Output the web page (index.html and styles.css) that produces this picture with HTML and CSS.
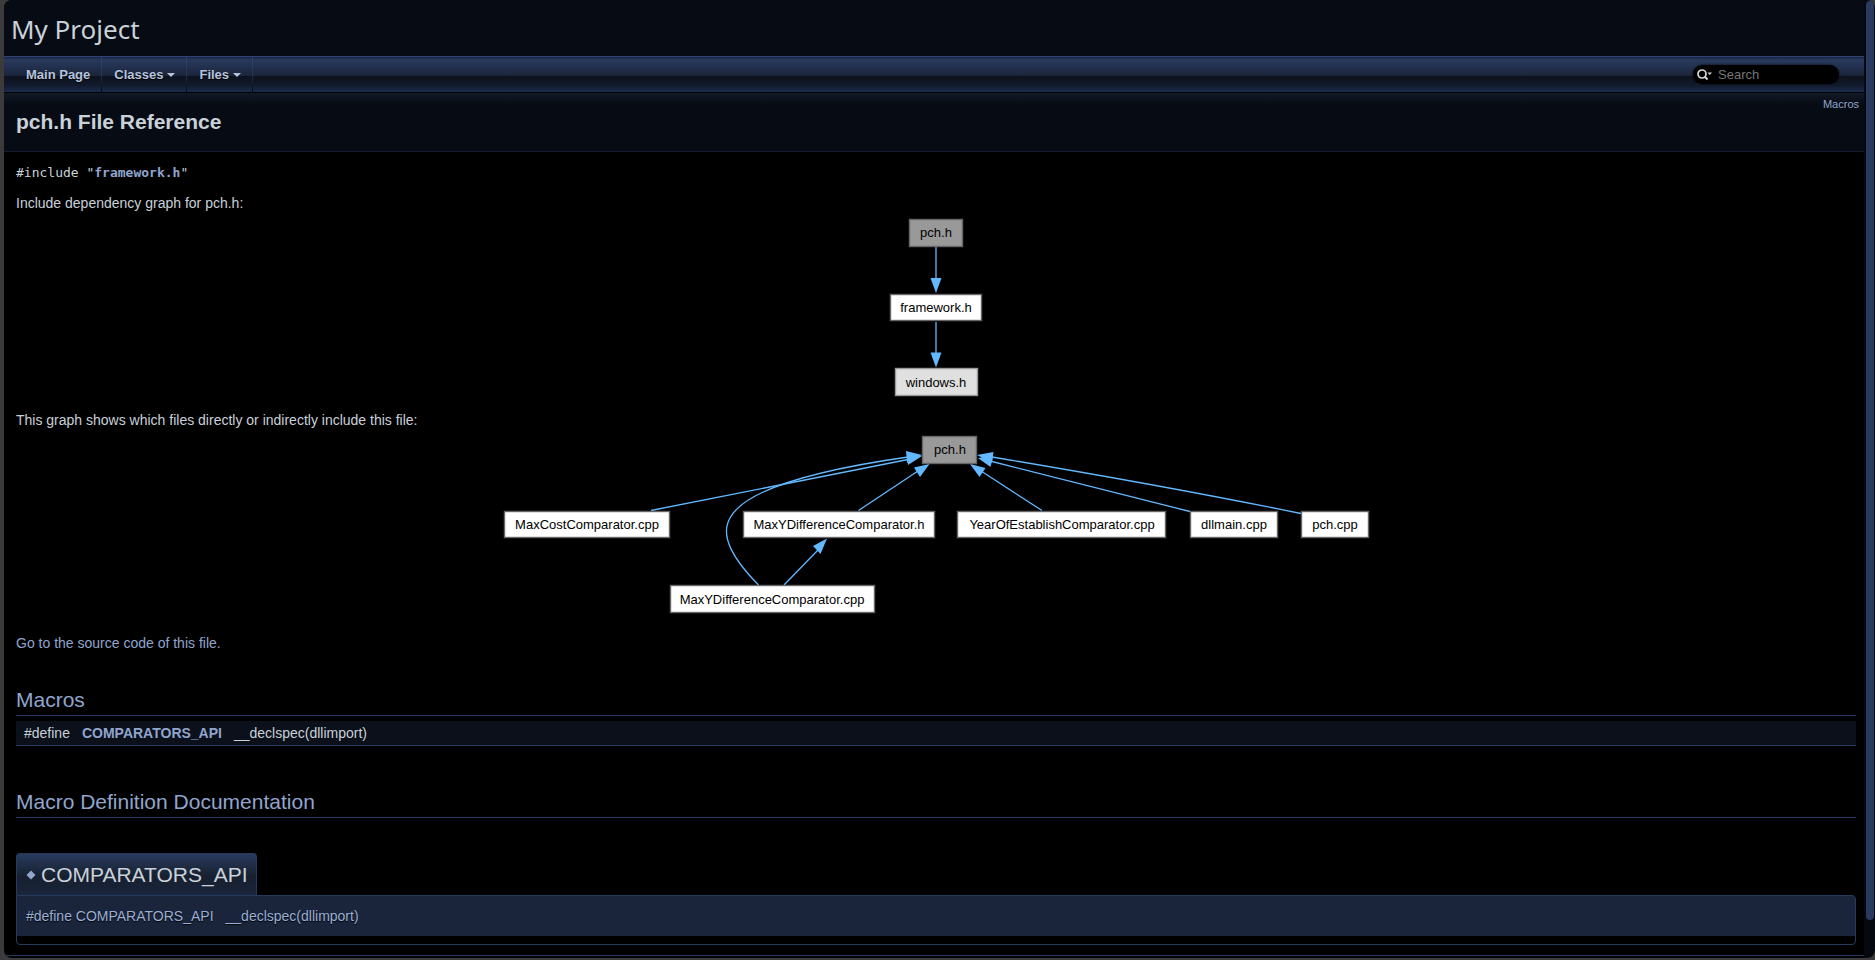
FILE: index.html
```html
<!DOCTYPE html>
<html lang="en">
<head>
<meta charset="utf-8">
<title>My Project: pch.h File Reference</title>
<link rel="stylesheet" href="styles.css">
</head>
<body>
<div class="frame">
  <div class="page">
    <header class="titlearea"><div class="projectname">My Project</div></header>
    <nav class="navbar" aria-label="Main">
      <ul class="menu">
        <li><a href="#">Main Page</a></li>
        <li><a href="#">Classes<span class="arrow"></span></a></li>
        <li><a href="#">Files<span class="arrow"></span></a></li>
      </ul>
      <label class="search">
        <svg width="16" height="12" viewBox="0 0 16 12" aria-hidden="true">
          <circle cx="5" cy="5" r="4" fill="none" stroke="#d8d8d8" stroke-width="1.700"/>
          <path d="M7.800 7.800L10.500 10.500" stroke="#d8d8d8" stroke-width="2"/>
          <path d="M10.500 3.500h4.500l-2.250 2.500z" fill="#d8d8d8"/>
        </svg>
        <input type="text" placeholder="Search" aria-label="Search">
      </label>
    </nav>
    <div class="header">
      <h1>pch.h File Reference</h1>
      <a class="summary" href="#macros">Macros</a>
    </div>
    <main class="contents">
      <code class="include">#include "<a href="#">framework.h</a>"</code>
      <p class="caption">Include dependency graph for pch.h:</p>
      <svg class="graph" width="94" height="179" viewBox="889 218 94 179" role="img" aria-label="pch.h include graph">
        <g class="edges">
          <path d="M936 247V278"/><path d="M936 322V353"/>
        </g>
        <g class="heads">
          <path d="M930.500 278h11L936 293z"/><path d="M930.500 352.500h11L936 367.500z"/>
        </g>
        <g class="nodes">
          <rect class="self" x="909.500" y="219.500" width="53" height="27"/><text x="936" y="237">pch.h</text>
          <rect x="890.500" y="294.500" width="91" height="26"/><text x="936" y="312">framework.h</text>
          <rect class="ext" x="895.500" y="368.500" width="82" height="27"/><text x="936" y="387">windows.h</text>
        </g>
      </svg>
      <p class="caption">This graph shows which files directly or indirectly include this file:</p>
      <svg class="graph" width="867" height="179" viewBox="503 435 867 179" role="img" aria-label="Files that include pch.h">
        <g class="edges">
          <path d="M651 510.500L908 459.500"/>
          <path d="M758.500 585C735 561 719 537 730 518C748 484 845 466 908 457"/>
          <path d="M858.500 510.500L918 471"/>
          <path d="M784 585L818 550"/>
          <path d="M1042 510.500L981 471"/>
          <path d="M1190 511.500L992 461.500"/>
          <path d="M1301 513.500C1200 493 1100 475 992 457"/>
        </g>
        <g class="heads">
          <path d="M906 451L922 455L907 463z"/>
          <path d="M907 454L922 456L908 465z"/>
          <path d="M914 467.500L929.500 464L920 477z"/>
          <path d="M813 546L827 538.500L820.500 554z"/>
          <path d="M985.500 468L970 464L979.500 477z"/>
          <path d="M993 456L978 458L990.500 467z"/>
          <path d="M993.500 452L977 455L992 463z"/>
        </g>
        <g class="nodes">
          <rect class="self" x="922.500" y="436.500" width="54" height="27"/><text x="950" y="454">pch.h</text>
          <rect x="504.500" y="511.500" width="165" height="26"/><text x="587" y="529">MaxCostComparator.cpp</text>
          <rect x="743.500" y="511.500" width="191" height="26"/><text x="839" y="529">MaxYDifferenceComparator.h</text>
          <rect x="957.500" y="511.500" width="208" height="26"/><text x="1062" y="529">YearOfEstablishComparator.cpp</text>
          <rect x="1190.500" y="511.500" width="87" height="26"/><text x="1234" y="529">dllmain.cpp</text>
          <rect x="1301.500" y="511.500" width="67" height="26"/><text x="1335" y="529">pch.cpp</text>
          <rect x="670.500" y="585.500" width="204" height="27"/><text x="772" y="604">MaxYDifferenceComparator.cpp</text>
        </g>
      </svg>
      <p class="source"><a href="#">Go to the source code of this file.</a></p>
      <h2 id="macros" class="group">Macros</h2>
      <table class="decls"><tbody><tr><td>#define</td><td><a href="#api">COMPARATORS_API</a></td><td class="rest">__declspec(dllimport)</td></tr></tbody></table>
      <h2 class="group docs">Macro Definition Documentation</h2>
      <h3 class="memtitle" id="api"><a href="#api" aria-label="Permalink"><svg width="10" height="10" viewBox="0 0 10 10" aria-hidden="true"><path d="M5 .5L9.500 5L5 9.500L.5 5z" fill="#90a5ce"/></svg></a>COMPARATORS_API</h3>
      <section class="memitem"><div class="memproto"><span>#define COMPARATORS_API</span><span>__declspec(dllimport)</span></div></section>
    </main>
    <footer class="footer"></footer>
  </div>
  <div class="scrollbar" aria-hidden="true"><div class="thumb"></div></div>
</div>
</body>
</html>
```
FILE: styles.css
```css
* { box-sizing: border-box; }
body { margin: 0; background: #3b3b3b; color: #c9d1d9; font: 14px/22px "Liberation Sans", Arial, sans-serif; }
a { color: #90a5ce; text-decoration: none; }
.frame { display: flex; height: 100vh; padding: 0 0 2px 4px; overflow: hidden; }
.page { flex: 1; min-width: 0; background: #000; border-radius: 8px 0 0 8px; overflow: hidden; display: flex; flex-direction: column; }
.titlearea { flex: none; background: #070b13; border-bottom: 1px solid #2c4374; height: 57px; padding: 10px 7px; }
.projectname { font: 26px/38px "Noto Sans", Tahoma, sans-serif; }
.navbar { flex: none; height: 36px; display: flex; justify-content: space-between; align-items: center; padding: 0 25px 0 11px; border-bottom: 1px solid #000; background: linear-gradient(#1a2440 0, #283a5e 3px, #1a2439 19px, #0d111c 19px, #111a2c 28px, #1c2c4c 35px); }
.menu { display: flex; align-self: stretch; margin: 0; padding: 0; list-style: none; }
.menu li { display: flex; border-right: 1px solid; border-image: linear-gradient(#2d4677, #223252 50%, #05070c) 1; }
.menu a { display: flex; align-items: center; gap: 4px; padding: 0 11px 0 12px; color: #b6c4df; font-size: 13px; font-weight: bold; text-shadow: 0 1px 1px #000; }
.menu li:first-child a { padding: 0 11px; }
.arrow { border: 4px solid transparent; border-top-color: #b6c4df; border-bottom: 0; }
.search { display: flex; align-items: center; gap: 5px; width: 146px; height: 19px; padding-left: 4px; border-radius: 10px; background: #000; box-shadow: 0 0 2px #000; }
.search input { flex: 1; min-width: 0; padding: 0; border: 0; outline: 0; background: none; color: #c9d1d9; font: 13px/18px "Liberation Sans", Arial, sans-serif; }
.search input::placeholder { color: #757575; opacity: 1; }
.header { flex: none; display: flex; justify-content: space-between; align-items: flex-start; height: 59px; padding: 0 5px 0 12px; border-bottom: 1px solid #151c2f; background: linear-gradient(#111a27, #070b13 12px); }
h1 { margin: 0; padding-top: 16px; font-size: 21px; line-height: 26px; }
.summary { padding-top: 4px; font-size: 11px; line-height: 14px; }
.contents { flex: 1; min-height: 0; display: flex; flex-direction: column; padding: 10px 8px 0 12px; }
.include { font: 13px/22px "DejaVu Sans Mono", monospace; }
.include a { font-weight: bold; }
.caption { margin: 8px 0 4px; }
.graph { align-self: center; display: block; }
.graph + .caption { margin: 12px 0 4px; }
.graph .edges { fill: none; stroke: #63b8ff; stroke-width: 1.300; }
.graph .heads { fill: #63b8ff; }
.graph rect { fill: #fff; stroke: #666; stroke-width: 1.400; }
.graph .self { fill: #999; stroke: #666; }
.graph .ext { fill: #e0e0e0; stroke: #999; }
.graph text { fill: #000; font: 13px "Liberation Sans", Arial, sans-serif; text-anchor: middle; }
.source { margin: 18px 0 0; }
.group { margin: 33px 0 0; padding-bottom: 2px; border-bottom: 1px solid #283a5d; color: #90a5ce; font-size: 21px; font-weight: normal; line-height: 26px; }
.decls { width: 100%; margin-top: 5px; border-collapse: separate; border-spacing: 0; border-bottom: 1px solid #283a5d; background: #0b101a; }
.decls td { padding: 1px 4px 1px 8px; white-space: nowrap; }
.decls a { font-weight: bold; }
.decls .rest { width: 100%; }
.group.docs { margin-top: 43px; }
.memtitle { align-self: flex-start; display: flex; align-items: center; gap: 5px; height: 42px; margin: 35px 0 0; padding: 0 8px 0 9px; border: 1px solid #283a5d; border-bottom: 0; border-radius: 4px 4px 0 0; background: linear-gradient(#283a5d, #16202f 55%, #1a243b); font-size: 21px; font-weight: 300; }
.memtitle a { display: flex; }
.memitem { padding-bottom: 8px; border: 1px solid #283a5d; border-radius: 0 4px 4px 4px; }
.memproto { display: flex; gap: 12px; padding: 9px; background: #1a243b; color: #9bafd4; text-shadow: 0 1px 1px #000; }
.footer { flex: none; height: 3px; border-top: 1px solid #283a5d; }
.scrollbar { width: 11px; padding: 1px 1px 0 2px; background: #05080f; border-radius: 0 8px 8px 0; }
.thumb { height: 96%; border-radius: 5px; background: #283a5d; }
```
